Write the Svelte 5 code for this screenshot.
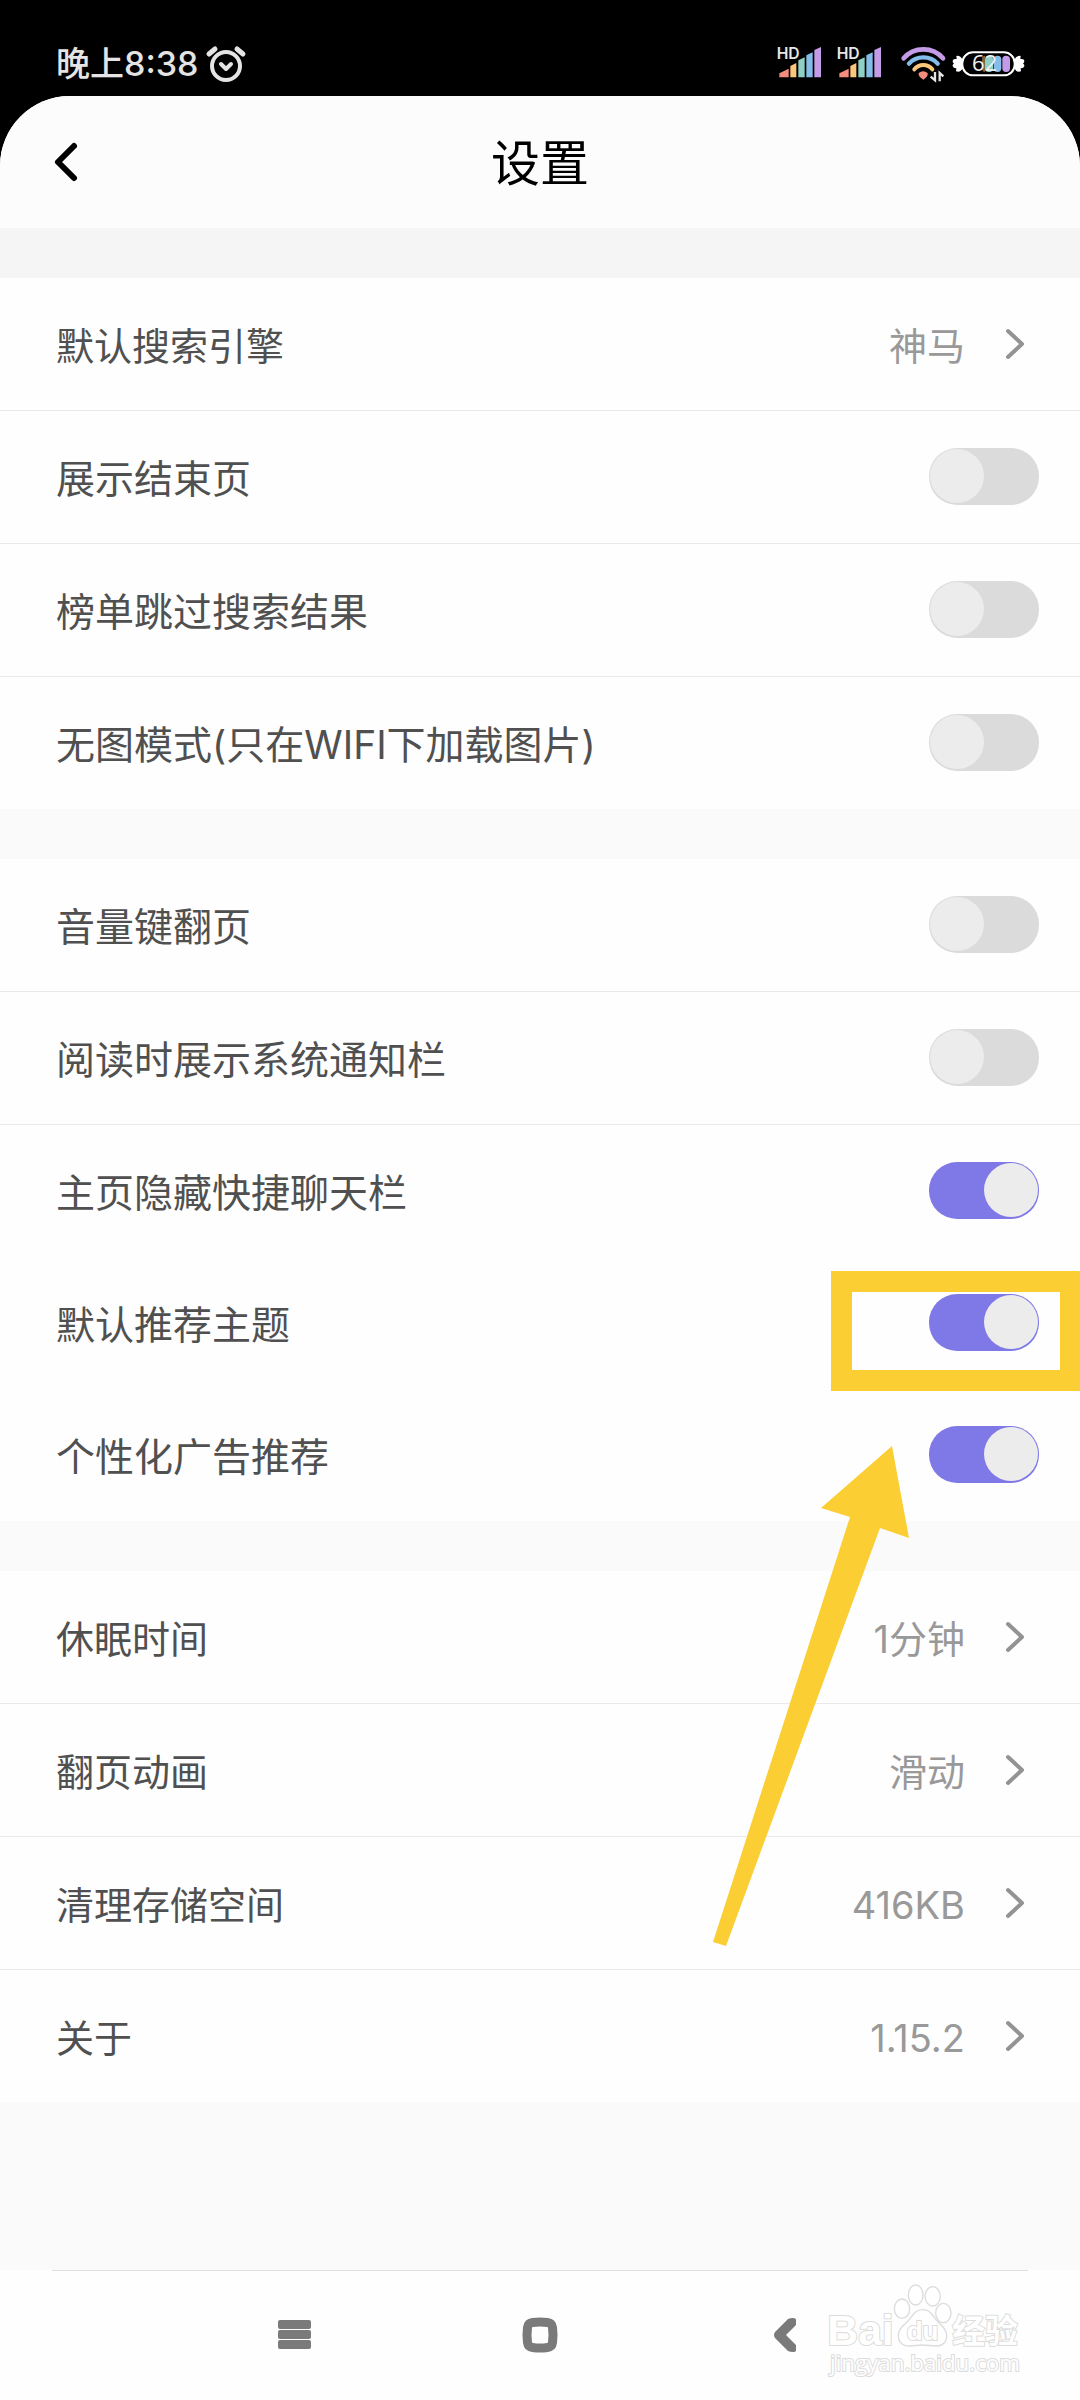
<script lang="ts">
	type Item = {
		id: string;
		label: string;
		value?: string;
		on?: boolean;
		plain?: boolean;
		marked?: boolean;
	};

	let groups = $state<Item[][]>([
		[
			{ id: "engine", label: "默认搜索引擎", value: "神马" },
			{ id: "endpage", label: "展示结束页", on: false },
			{ id: "skip", label: "榜单跳过搜索结果", on: false },
			{ id: "noimage", label: "无图模式(只在WIFI下加载图片)", on: false },
		],
		[
			{ id: "volume", label: "音量键翻页", on: false },
			{ id: "notice", label: "阅读时展示系统通知栏", on: false },
			{ id: "chat", label: "主页隐藏快捷聊天栏", on: true, plain: true },
			{ id: "theme", label: "默认推荐主题", on: true, plain: true, marked: true },
			{ id: "ads", label: "个性化广告推荐", on: true },
		],
		[
			{ id: "sleep", label: "休眠时间", value: "1分钟" },
			{ id: "anim", label: "翻页动画", value: "滑动" },
			{ id: "storage", label: "清理存储空间", value: "416KB" },
			{ id: "about", label: "关于", value: "1.15.2" },
		],
	]);
</script>

{#snippet signal()}
	<svg class="signal" viewBox="114 72 156 120" aria-hidden="true">
		<path d="M118 172v-12l28-14v26z" fill="#f58d7e" />
		<path d="M151 172v-34l18-9v43z" fill="#fbc77b" />
		<path d="M175 172v-51l19-9v60z" fill="#8fd0c5" />
		<path d="M199 172v-66l19-9v75z" fill="#84bdea" />
		<path d="M223 172v-82l20-9v91z" fill="#c49be6" />
		<text x="110" y="117" font-size="47" font-weight="600" fill="#e6e6e6" stroke="#000" stroke-width="3" paint-order="stroke">HD</text>
	</svg>
{/snippet}

<div class="phone">
	<div class="status">
		<span class="clock">晚上8:38</span>
		<svg class="alarm" viewBox="0 0 40 40" fill="none" stroke="#e4e4e4" stroke-linecap="round" aria-hidden="true">
			<circle cx="20" cy="22" r="14" stroke-width="4" />
			<path d="M3 10 9 5M31 5l6 5" stroke-width="5" />
			<path d="m15 20 5 5 5-5" stroke-width="4" stroke-linejoin="round" />
		</svg>
		<div class="indicators">
			{@render signal()}
			{@render signal()}
			<svg class="wifi" viewBox="474 72 138 120" fill="none" stroke-linecap="round" aria-hidden="true">
				<path d="M491 115c30-36 88-36 118 0" stroke="#c49be6" stroke-width="14" />
				<path d="M507 131c22-25 64-25 86 0" stroke="#84bdea" stroke-width="13" />
				<path d="M523 148c14-17 40-17 54 0" stroke="#fbc77b" stroke-width="12" />
				<path d="M536 159q13-10 27 0 2 11-13 20-16-9-14-20z" fill="#f58d7e" />
				<path d="M585 156v25l-13-11M599 184v-25l11 10" stroke="#e6e6e6" stroke-width="7" stroke-linecap="butt" />
			</svg>
			<svg class="battery" viewBox="636 72 222 120" aria-hidden="true">
				<path d="M668 119q-8-14-19-11l1 9q-12-2-12 7 0 4 4 7-5 2-4 7 2 8 11 6l-1 10q13 5 20-9zM823 119q8-14 19-11l-1 9q12-2 12 7 0 4-4 7 5 2 4 7-2 8-11 6l1 10q-13 5-20-9z" fill="#fff" />
				<rect x="667" y="97" width="157" height="69" rx="32" fill="#000" stroke="#fff" stroke-width="6" />
				<path d="M735 107q-9 0-9 11v27q0 11 9 11z" fill="#fbc77b" opacity="0.5" />
				<rect x="735" y="107" width="24" height="49" rx="11" fill="#8fd0c5" />
				<rect x="761" y="107" width="23" height="49" rx="11" fill="#84bdea" />
				<rect x="787" y="107" width="23" height="49" rx="11" fill="#c49be6" />
				<text class="level" x="696" y="153" font-size="66" fill="#f2f2f2">62</text>
			</svg>
		</div>
	</div>

	<div class="sheet">
		<header>
			<button type="button" class="back" aria-label="返回">
				<svg viewBox="0 0 24 40" fill="none" stroke="#000" stroke-width="6" stroke-linecap="round" stroke-linejoin="round">
					<path d="M20 4 4 20l16 16" />
				</svg>
			</button>
			<h1>设置</h1>
		</header>

		<main>
			{#each groups as group}
				<section>
					{#each group as item (item.id)}
						{#if item.value !== undefined}
							<button type="button" class="row link">
								<span class="name">{item.label}</span>
								<span class="value">{item.value}</span>
								<svg class="arrow" viewBox="0 0 20 32" fill="none" stroke="#939393" stroke-width="4" stroke-linecap="round" stroke-linejoin="round">
									<path d="m3 3 14 13L3 29" />
								</svg>
							</button>
						{:else}
							<div class="row" class:plain={item.plain}>
								<label class="name" for={item.id}>{item.label}</label>
								<input id={item.id} type="checkbox" role="switch" bind:checked={item.on} />
								{#if item.marked}
									<div class="mark"></div>
									<svg class="pointer" viewBox="0 0 198 500" fill="#fbce34" aria-hidden="true">
										<path d="M180 0 109 62l29 9L1 496l13 4L168 82l29 10z" />
									</svg>
								{/if}
							</div>
						{/if}
					{/each}
				</section>
			{/each}
		</main>

		<nav>
			<button type="button" aria-label="最近任务">
				<svg viewBox="0 0 34 34" fill="#7a7a7a">
					<rect y="2" width="33" height="9" rx="2" />
					<rect y="12" width="33" height="9" rx="2" />
					<rect y="22" width="33" height="9" rx="2" />
				</svg>
			</button>
			<button type="button" aria-label="主屏幕">
				<svg viewBox="0 0 34 34" fill="#7a7a7a" fill-rule="evenodd">
					<path d="M9 0Q17-1 25 0q8 1 9 9 1 8 0 16-1 8-9 9-8 1-16 0-8-1-9-9-1-8 0-16Q1 1 9 0zM10 9Q9 9 9 10q-1 7 0 14 0 1 1 1 7 1 14 0 1 0 1-1 1-7 0-14 0-1-1-1-7-1-14 0z" />
				</svg>
			</button>
			<button type="button" aria-label="返回上一级">
				<svg viewBox="0 0 34 34" fill="#7a7a7a">
					<path d="M7 14 20 1q2-1 5-1 3 0 3 2v5L18 17l10 10v5q0 2-3 2t-5-1L7 20q-2-3 0-6z" />
				</svg>
			</button>
			<svg class="watermark" viewBox="144 128 582 285" fill="#fff" stroke="#dcdcdc" stroke-width="4" aria-hidden="true">
				<text class="brand" x="142" y="314" font-size="128">Bai</text>
				<ellipse cx="366" cy="205" rx="23" ry="29" />
				<ellipse cx="407" cy="164" rx="22" ry="30" />
				<ellipse cx="458" cy="168" rx="23" ry="29" />
				<ellipse cx="490" cy="218" rx="23" ry="29" />
				<path d="M428 208c-24 0-31 20-44 34-15 15-29 24-29 43 0 24 18 34 36 32 14-1 24-3 37-3s23 2 37 3c20 1 36-9 35-33-1-20-16-28-30-44-12-14-18-32-42-32z" />
				<text class="brand" x="380" y="298" font-size="78">du</text>
				<text class="brand" x="517" y="308" font-size="98">经验</text>
				<text class="site" x="150" y="392" font-size="67">jingyan.baidu.com</text>
			</svg>
		</nav>
	</div>
</div>

<style>
	:global(body) {
		background: #000;
	}

	.phone {
		display: flex;
		flex-direction: column;
		min-height: 100vh;
		background: #000;
		font-family: Inter, "Noto Sans CJK SC", sans-serif;
	}

	button {
		border: none;
		padding: 0;
		background: none;
		color: inherit;
		font: inherit;
		cursor: pointer;
	}

	svg {
		display: block;
		overflow: visible;
	}

	.status {
		display: flex;
		align-items: center;
		height: 64px;
		padding: 32px 54px 0 56px;
	}

	.clock {
		color: #e4e4e4;
		font-size: 34px;
		font-weight: 500;
		line-height: 40px;
	}

	.alarm {
		width: 40px;
		height: 40px;
		margin-left: 8px;
	}

	.indicators {
		display: flex;
		gap: 8px;
		margin-left: auto;
	}

	.indicators svg {
		height: 40px;
	}

	.signal {
		width: 52px;
	}

	.wifi {
		width: 46px;
	}

	.battery {
		width: 74px;
	}

	.level {
		font-family: "Open Sans", sans-serif;
	}

	.sheet {
		flex: 1;
		display: flex;
		flex-direction: column;
		border-radius: 70px 70px 0 0;
		background: #fafafa;
		overflow: hidden;
	}

	header {
		display: grid;
		grid-template-columns: 24px 1fr 24px;
		align-items: center;
		height: 132px;
		padding: 0 54px;
		background: #fcfcfc;
	}

	.back svg {
		width: 24px;
		height: 40px;
	}

	h1 {
		margin: 0;
		padding-top: 4px;
		font-size: 49px;
		font-weight: 400;
		line-height: 64px;
		text-align: center;
		color: #000;
	}

	main {
		flex: 1;
	}

	section {
		border-top: 50px solid #fafafa;
		background: #fefefe;
	}

	section:first-child {
		border-top-color: #f5f5f5;
	}

	.row {
		position: relative;
		display: flex;
		align-items: center;
		box-sizing: content-box;
		height: 132px;
		padding: 0 41px 0 56px;
		border-bottom: 1px solid #eaeaea;
		color: #505050;
		font-size: 39px;
		line-height: 48px;
		text-align: left;
	}

	.row.plain,
	.row:last-child {
		border-bottom: none;
	}

	.link {
		box-sizing: border-box;
		width: 100%;
		height: 133px;
		padding-right: 55px;
		font-size: 38px;
	}

	.link:last-child {
		height: 132px;
	}

	.name,
	.value {
		padding-top: 3px;
	}

	.name {
		flex: 1;
	}

	.value {
		color: #999;
	}

	.arrow {
		width: 20px;
		height: 32px;
		margin-left: 40px;
	}

	input {
		appearance: none;
		width: 110px;
		height: 57px;
		margin: 0 0 1px;
		padding: 1px;
		border-radius: 28px;
		background: #dbdbdb;
		cursor: pointer;
	}

	input::before {
		content: "";
		display: block;
		width: 54px;
		height: 54px;
		border-radius: 50%;
		background: #ececec;
	}

	input:checked {
		background: #7f79e7;
	}

	input:checked::before {
		margin-left: auto;
	}

	/* callout drawn over the highlighted switch */
	.mark {
		position: absolute;
		top: 14px;
		right: -1px;
		z-index: 2;
		box-sizing: border-box;
		width: 250px;
		height: 120px;
		border: 21px solid #fbce34;
		pointer-events: none;
	}

	.pointer {
		position: absolute;
		top: 189px;
		right: 170px;
		z-index: 2;
		width: 198px;
		height: 500px;
		pointer-events: none;
	}

	nav {
		position: relative;
		display: flex;
		align-items: center;
		height: 130px;
		padding: 0 16%;
		background: #fefefe;
	}

	nav::before {
		content: "";
		position: absolute;
		top: 0;
		left: 52px;
		right: 52px;
		height: 1px;
		background: #e0e0e0;
	}

	nav button {
		flex: 1;
		display: flex;
		justify-content: center;
	}

	nav button svg {
		width: 34px;
		height: 34px;
	}

	.watermark {
		position: absolute;
		right: 58px;
		bottom: 22px;
		width: 194px;
		height: 95px;
		pointer-events: none;
	}

	.watermark text {
		paint-order: stroke;
		stroke-width: 6px;
	}

	.brand {
		font-family: "Liberation Sans", "Noto Sans CJK SC", sans-serif;
		font-weight: 700;
	}

	.site {
		font-family: "Open Sans", sans-serif;
	}
</style>
